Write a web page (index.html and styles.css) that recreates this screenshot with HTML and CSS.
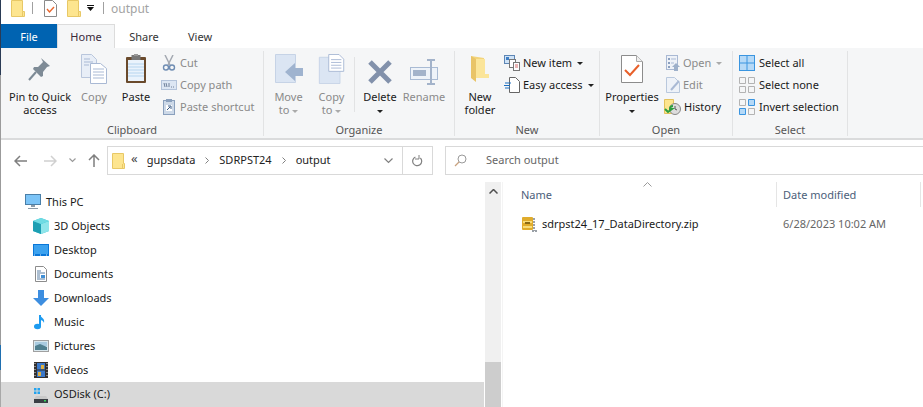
FILE: index.html
```html
<!DOCTYPE html>
<html lang="en">
<head>
<meta charset="utf-8">
<title>output</title>
<link rel="stylesheet" href="styles.css">
</head>
<body>
<div class="window">
  <div class="edge"></div>
  <div class="app">
    <header class="titlebar">
      <svg class="qa-folder" width="14" height="17" viewBox="0 0 14 17"><path d="M.5.500h11v11h2v5H.5z" fill="#fde58f" stroke="#e8c866"/><path d="M11.500 11.500v5" stroke="#e8c866"/></svg>
      <span class="qa-sep"></span>
      <svg class="qa-props" width="13" height="17" viewBox="0 0 13 17"><path d="M.5.500h8l4 4v12H.5z" fill="#fff" stroke="#8a8a8a"/><path d="M3 9l2.500 3L10 7" fill="none" stroke="#e9662c" stroke-width="1.400"/></svg>
      <svg class="qa-folder2" width="14" height="17" viewBox="0 0 14 17"><path d="M.5.500h11v11h2v5H.5z" fill="#fde58f" stroke="#e8c866"/><path d="M11.500 11.500v5" stroke="#e8c866"/></svg>
      <svg class="qa-menu" width="7" height="6" viewBox="0 0 7 6"><path d="M0 0h7v1H0zM0 2h7L3.500 6z" fill="#111"/></svg>
      <span class="qa-sep qa-sep-b"></span>
      <span class="title-text">output</span>
    </header>
    <nav class="tabs">
      <span class="tab tab-file">File</span>
      <span class="tab tab-home">Home</span>
      <span class="tab tab-share">Share</span>
      <span class="tab tab-view">View</span>
    </nav>
    <section class="ribbon">
      <div class="group g-clipboard">
        <div class="group-body">
          <div class="big b-pin">
            <svg width="24" height="26" viewBox="0 0 24 26"><path d="M13 2l9 8-3 1-4 5 0 4-2 1-8-8 1-2 4 0 5-5z" fill="#7e8b96"/><path d="M8 16L1 24" stroke="#7e8b96" stroke-width="2"/></svg>
            <span class="big-label">Pin to Quick<br>access</span>
          </div>
          <div class="big b-copy">
            <svg width="26" height="30" viewBox="0 0 26 30"><path d="M.5.500h10l5 5v18H.5z" fill="#e8eef7" stroke="#b9c6dc"/><path d="M9.500 9.500h10l6 5v15h-16z" fill="#fff" stroke="#a9b9d4"/><path d="M12 15h11M12 18h11M12 21h11M12 24h11M3 5h6M3 8h9M3 11h5" stroke="#a9b9d4"/></svg>
            <span class="big-label muted">Copy</span>
          </div>
          <div class="big b-paste">
            <svg width="22" height="30" viewBox="0 0 22 30"><rect x="1" y="3" width="20" height="26" fill="#6a4a2c" rx="1"/><rect x="3" y="6" width="16" height="21" fill="#eaf3fc"/><path d="M3 10h16M3 13h16M3 16h16M3 19h16M3 22h16" stroke="#b6d5ef"/><rect x="6.500" y="1" width="9" height="5" fill="#777"/><rect x="9" y="0" width="4" height="2" fill="#999"/></svg>
            <span class="big-label">Paste</span>
          </div>
          <div class="small-col">
            <div class="small muted">
              <svg width="16" height="16" viewBox="0 0 16 16"><path d="M4 0l5 10M12 0L7 10" stroke="#a4a9b2" stroke-width="1.500" fill="none"/><circle cx="5" cy="12.500" r="2.500" fill="none" stroke="#6f8db3" stroke-width="1.400"/><circle cx="11" cy="12.500" r="2.500" fill="none" stroke="#6f8db3" stroke-width="1.400"/></svg>
              <span>Cut</span>
            </div>
            <div class="small muted">
              <svg width="16" height="16" viewBox="0 0 16 16"><rect x=".5" y="3.500" width="15" height="9" fill="#dce6f3" stroke="#b3c3da"/><path d="M3 6l1 4M5 6l1 4M8 6l0 4" stroke="#6e7f99"/><path d="M10 10h1M12 10h1" stroke="#6e7f99"/></svg>
              <span>Copy path</span>
            </div>
            <div class="small muted">
              <svg width="16" height="16" viewBox="0 0 16 16"><rect x="2.500" y="1.500" width="11" height="14" fill="#cdd9e8" stroke="#8aa0bd"/><rect x="5" y="0" width="6" height="3" fill="#8aa0bd"/><rect x="5" y="6" width="6" height="6" fill="#fff"/><path d="M6 11l3-3M7 7h3v3" stroke="#3a5a85" fill="none"/></svg>
              <span>Paste shortcut</span>
            </div>
          </div>
        </div>
        <div class="group-label">Clipboard</div>
      </div>

      <div class="group g-organize">
        <div class="group-body">
          <div class="big b-move">
            <svg width="28" height="30" viewBox="0 0 28 30"><path d="M.5.500h20v28H.5z" fill="#dbe5f3" stroke="#c6d3e6"/><path d="M10 18l10-9v5h8v8h-8v5z" fill="#9fb3cf"/></svg>
            <span class="big-label muted">Move<br>to <i class="caret caret-grey"></i></span>
          </div>
          <div class="big b-copyto">
            <svg width="28" height="32" viewBox="0 0 28 32"><path d="M.5 3.500h22v28H.5z" fill="#dbe5f3" stroke="#c6d3e6"/><path d="M10.500.5h11l5 5v13h-16z" fill="#fff" stroke="#a9b9d4"/><path d="M13 6h11M13 9h11M13 12h11M13 15h11" stroke="#a9b9d4"/></svg>
            <span class="big-label muted">Copy<br>to <i class="caret caret-grey"></i></span>
          </div>
          <span class="inner-sep"></span>
          <div class="big b-delete">
            <svg width="26" height="26" viewBox="0 0 26 26"><path d="M3 3l20 20M23 3L3 23" stroke="#8291ab" stroke-width="5"/></svg>
            <span class="big-label">Delete<br><i class="caret"></i></span>
          </div>
          <div class="big b-rename">
            <svg width="28" height="26" viewBox="0 0 28 26"><rect x=".5" y="8.500" width="27" height="12" fill="#eef3f9" stroke="#a9bbd4"/><rect x="3" y="11" width="13" height="6" fill="#a3b3ca"/><path d="M17 1h8M21 1v25M17 25h8" stroke="#a3b3ca" stroke-width="2" fill="none"/></svg>
            <span class="big-label muted">Rename</span>
          </div>
        </div>
        <div class="group-label">Organize</div>
      </div>

      <div class="group g-new">
        <div class="group-body">
          <div class="big b-newfolder">
            <svg width="20" height="28" viewBox="0 0 20 28"><path d="M1 1l13 2v20H1z" fill="#f3d47b"/><path d="M5 4h10v15h4v4H6z" fill="#fbe59a"/><path d="M1 23l5 4V4L1 1z" fill="#e9c468"/></svg>
            <span class="big-label">New<br>folder</span>
          </div>
          <div class="small-col">
            <div class="small">
              <svg width="16" height="16" viewBox="0 0 16 16"><rect x=".5" y=".5" width="10" height="8" fill="#cfe3f7" stroke="#5d86b5"/><rect x="2" y="2" width="3" height="3" fill="#3f7fc6"/><rect x="5.500" y="4.500" width="6" height="8" fill="#fff" stroke="#777"/><rect x="9.500" y="7.500" width="6" height="8" fill="#fff" stroke="#777"/><path d="M11 10h3M11 12h3" stroke="#d56b6b"/></svg>
              <span>New item</span><i class="caret"></i>
            </div>
            <div class="small">
              <svg width="16" height="16" viewBox="0 0 16 16"><path d="M5.500.5h6l4 4v11h-10z" fill="#fff" stroke="#666"/><path d="M1 6h6M0 8.500h6M1 11h5" stroke="#1c6fc0" stroke-width="1"/></svg>
              <span>Easy access</span><i class="caret"></i>
            </div>
          </div>
        </div>
        <div class="group-label">New</div>
      </div>

      <div class="group g-open">
        <div class="group-body">
          <div class="big b-props">
            <svg width="22" height="28" viewBox="0 0 22 28"><path d="M.5.500h15l6 6v21H.5z" fill="#fff" stroke="#8c8c8c"/><path d="M15.500.5v6h6" fill="#eee" stroke="#aaa"/><path d="M4 15l5 5 9-10" fill="none" stroke="#e8602a" stroke-width="2"/></svg>
            <span class="big-label">Properties<br><i class="caret"></i></span>
          </div>
          <div class="small-col">
            <div class="small muted">
              <svg width="14" height="16" viewBox="0 0 14 16"><rect x=".5" y=".5" width="11" height="14" fill="#eef2f8" stroke="#a9b9d4"/><path d="M2 3h2v2H2zM2 7h2v2H2zM2 11h2v2H2z" fill="#8ba0bf"/><path d="M5 4h5M5 8h3" stroke="#a9b9d4"/><path d="M10 8l4 4h-2v4H8v-4H6z" fill="#9db0ca"/></svg>
              <span>Open</span><i class="caret caret-grey"></i>
            </div>
            <div class="small muted">
              <svg width="14" height="16" viewBox="0 0 14 16"><path d="M.5.500h8l5 5v10H.5z" fill="#eef2f8" stroke="#b9c8dd"/><path d="M5 13L13 4" stroke="#a9b9d4" stroke-width="2"/></svg>
              <span>Edit</span>
            </div>
            <div class="small">
              <svg class="hist-icon" width="17" height="16" viewBox="0 0 17 16"><path d="M.5.500h9v9h1v5H.5z" fill="#fde58f" stroke="#e3c25d"/><circle cx="11" cy="10" r="5.500" fill="#ddd" stroke="#888"/><path d="M11 7v3l2 1" stroke="#555" fill="none"/><path d="M1 10l3 3 4-3-2 0c0-2 1-3 3-3" fill="none" stroke="#2f9e3f" stroke-width="2"/></svg>
              <span>History</span>
            </div>
          </div>
        </div>
        <div class="group-label">Open</div>
      </div>

      <div class="group g-select">
        <div class="group-body">
          <div class="small-col">
            <div class="small">
              <svg width="16" height="16" viewBox="0 0 16 16"><rect x=".5" y=".5" width="15" height="15" fill="#b5d9f7" stroke="#3a95e0"/><path d="M8 0v16M0 8h16" stroke="#3a95e0"/></svg>
              <span>Select all</span>
            </div>
            <div class="small">
              <svg width="16" height="16" viewBox="0 0 16 16"><path d="M.5.500h6v6h-6zM9.500.5h6v6h-6zM.5 9.500h6v6h-6zM9.500 9.500h6v6h-6z" fill="none" stroke="#b3b3b3"/></svg>
              <span>Select none</span>
            </div>
            <div class="small">
              <svg width="16" height="16" viewBox="0 0 16 16"><path d="M.5.500h6v6h-6zM9.500 9.500h6v6h-6z" fill="none" stroke="#b3b3b3"/><path d="M9.500.5h6v6h-6zM.5 9.500h6v6h-6z" fill="#b5d9f7" stroke="#3a95e0"/></svg>
              <span>Invert selection</span>
            </div>
          </div>
        </div>
        <div class="group-label">Select</div>
      </div>
    </section>

    <section class="addressrow">
      <div class="navbtns">
        <svg class="nb-back" width="13" height="12" viewBox="0 0 13 12"><path d="M6 1L1 6l5 5M1 6h12" fill="none" stroke="#7f7f7f" stroke-width="1.500"/></svg>
        <svg class="nb-fwd" width="13" height="12" viewBox="0 0 13 12"><path d="M7 1l5 5-5 5M12 6H0" fill="none" stroke="#d0d0d0" stroke-width="1.500"/></svg>
        <svg class="nb-down" width="7" height="5" viewBox="0 0 7 5"><path d="M.5.500l3 3 3-3" fill="none" stroke="#9a9a9a" stroke-width="1.200"/></svg>
        <svg class="nb-up" width="12" height="13" viewBox="0 0 12 13"><path d="M1 6l5-5 5 5M6 1v12" fill="none" stroke="#7f7f7f" stroke-width="1.500"/></svg>
      </div>
      <div class="addrbox">
        <svg class="addr-folder" width="13" height="16" viewBox="0 0 13 16"><path d="M.5.500h11v10h1v5H.5z" fill="#fde58f" stroke="#e8c866"/><path d="M10.500 11v4.500" stroke="#e8c866"/></svg>
        <span class="crumb-more">«</span>
        <span class="crumb">gupsdata</span>
        <svg class="crumb-sep" width="4" height="7" viewBox="0 0 4 7"><path d="M.5.500l3 3-3 3" fill="none" stroke="#808080"/></svg>
        <span class="crumb">SDRPST24</span>
        <svg class="crumb-sep" width="4" height="7" viewBox="0 0 4 7"><path d="M.5.500l3 3-3 3" fill="none" stroke="#808080"/></svg>
        <span class="crumb">output</span>
        <span class="grow"></span>
        <svg class="addr-chev" width="9" height="6" viewBox="0 0 9 6"><path d="M.5.500l4 4 4-4" fill="none" stroke="#808080" stroke-width="1.200"/></svg>
        <div class="addr-refresh">
          <svg width="11" height="12" viewBox="0 0 11 12"><path d="M7 2.200A4.500 4.500 0 1 1 2 3" fill="none" stroke="#808080" stroke-width="1.200" transform="rotate(20 5.500 6.500)"/><path d="M7 0v4H3" fill="none" stroke="#808080"/></svg>
        </div>
      </div>
      <div class="searchbox">
        <svg width="13" height="13" viewBox="0 0 13 13"><circle cx="8" cy="5" r="4" fill="none" stroke="#9a9a9a"/><path d="M5 8l-4 4" stroke="#c9a27f" stroke-width="1.200"/></svg>
        <span>Search output</span>
      </div>
    </section>

    <section class="main">
      <aside class="tree">
        <div class="row row-root">
          <svg width="16" height="16" viewBox="0 0 16 16"><rect x=".5" y=".5" width="15" height="10" fill="#7cc4f7" stroke="#4a7fa8"/><path d="M6 11h4v2H6zM3 14h10v1H3z" fill="#8a9aa8"/></svg>
          <span>This PC</span>
        </div>
        <div class="row">
          <svg width="16" height="16" viewBox="0 0 16 16"><path d="M8 0l8 3v10l-8 3-8-3V3z" fill="#35c0d0"/><path d="M8 6l8-3v10l-8 3z" fill="#8fe5ea"/><path d="M0 3l8 3v10l-8-3z" fill="#1c9fb3"/><path d="M8 0l8 3-8 3-8-3z" fill="#6fdbe3"/></svg>
          <span>3D Objects</span>
        </div>
        <div class="row">
          <svg width="16" height="16" viewBox="0 0 16 16"><rect x="0" y="2" width="16" height="12" fill="#0a77d8"/><rect x="1" y="3" width="14" height="9" fill="#3ca2ef"/><path d="M1 13h14" stroke="#cde6fb" stroke-dasharray="1 5"/></svg>
          <span>Desktop</span>
        </div>
        <div class="row">
          <svg width="16" height="16" viewBox="0 0 16 16"><path d="M2.500.5h8l3 3v12h-11z" fill="#fff" stroke="#8c8c8c"/><path d="M4 5h4M4 7h8M4 9h3M4 11h3M4 13h8" stroke="#5a7fa3"/><rect x="8" y="9" width="4" height="3" fill="#3f8fd6"/></svg>
          <span>Documents</span>
        </div>
        <div class="row">
          <svg width="16" height="16" viewBox="0 0 16 16"><path d="M5 0h6v8h5l-8 8-8-8h5z" fill="#3d8ee0"/></svg>
          <span>Downloads</span>
        </div>
        <div class="row">
          <svg width="16" height="16" viewBox="0 0 16 16"><path d="M7 1v11" stroke="#1d9bf0" stroke-width="2"/><ellipse cx="4.500" cy="12.500" rx="3.500" ry="2.700" fill="#1d9bf0"/><path d="M7 1c1 3 5 3 4 8-.5-2-2-3-4-3z" fill="#1d9bf0"/></svg>
          <span>Music</span>
        </div>
        <div class="row">
          <svg width="16" height="16" viewBox="0 0 16 16"><rect x=".5" y="2.500" width="15" height="11" fill="#d9e8ee" stroke="#a0a0a0"/><rect x="2" y="4" width="12" height="4" fill="#a9cbe0"/><path d="M2 8l5-2 7 3v3H2z" fill="#4f7f8f"/></svg>
          <span>Pictures</span>
        </div>
        <div class="row">
          <svg width="16" height="16" viewBox="0 0 16 16"><rect x="1" y="0" width="14" height="16" fill="#33302f"/><rect x="4" y="1" width="8" height="6.500" fill="#3b78c9"/><rect x="4" y="8.500" width="8" height="6.500" fill="#3b78c9"/><rect x="8" y="3" width="3" height="4" fill="#e0b040"/><rect x="5" y="10" width="3" height="4" fill="#e0b040"/><path d="M2 1v14M14 1v14" stroke="#ddd" stroke-dasharray="1 2"/></svg>
          <span>Videos</span>
        </div>
        <div class="row row-sel">
          <svg width="16" height="16" viewBox="0 0 16 16"><path d="M1 1h2.500v2.500H1zM4.500 1H7v2.500H4.500zM1 4.500h2.500V7H1zM4.500 4.500H7V7H4.500z" fill="#23a3ee"/><path d="M3 9h10l2 3v3H1v-3z" fill="#c9c9c9"/><rect x="1" y="12" width="14" height="4" fill="#3a3f45"/><rect x="11" y="13" width="2" height="1.500" fill="#35d45a"/></svg>
          <span>OSDisk (C:)</span>
        </div>
      </aside>
      <div class="scrollbar">
        <svg width="9" height="5" viewBox="0 0 9 5"><path d="M.5 4.500l4-4 4 4" fill="none" stroke="#505050" stroke-width="1.500"/></svg>
        <span class="grow"></span>
        <div class="scroll-thumb"></div>
      </div>
      <div class="files">
        <div class="file-head">
          <svg class="sort" width="9" height="5" viewBox="0 0 9 5"><path d="M.5 4.500l4-4 4 4" fill="none" stroke="#9a9a9a"/></svg>
          <div class="col col-name">Name</div>
          <div class="col col-date">Date modified</div>
        </div>
        <div class="file-row">
          <div class="cell-name">
            <svg width="16" height="16" viewBox="0 0 16 16"><rect x="0" y="1" width="11" height="13" rx="1" fill="#e0ac2c"/><path d="M1 5h9v2H1zM1 10h9v2H1z" fill="#f7dc7a"/><rect x="3" y="6" width="5" height="2" fill="#8a6a15"/><path d="M12 2v13M15 15H9" stroke="#9aa0a6" stroke-width="2" stroke-dasharray="2 1"/></svg>
            <span>sdrpst24_17_DataDirectory.zip</span>
          </div>
          <div class="cell-date">6/28/2023 10:02 AM</div>
        </div>
      </div>
    </section>
  </div>
</div>
</body>
</html>
```

FILE: styles.css
```css
* { box-sizing: border-box; }
html, body { margin: 0; padding: 0; height: 100%; overflow: hidden; background: #fff; }
body { font: 11px/16px "Noto Sans", "Open Sans", sans-serif; color: #1a1a1a; }
svg { flex: none; display: block; }
.grow { flex: 1; }

.window { display: flex; height: 407px; width: 923px; }
.edge {
  width: 1px; flex: none;
  background: linear-gradient(#2a3b55 0 75px, #9b9b9b 75px 345px, #1f6fb0 345px 370px, #a8a8a8 370px);
}
.app { flex: 1; min-width: 0; display: flex; flex-direction: column; }

.titlebar { height: 24px; display: flex; align-items: center; padding: 0 0 8px 10px; }
.qa-sep { width: 1px; height: 12px; background: #a0a0a0; margin-left: 7px; }
.qa-props { margin-left: 11px; }
.qa-folder2 { margin-left: 10px; }
.qa-menu { margin-left: 6px; }
.qa-sep-b { margin-left: 9px; }
.title-text { margin-left: 7px; color: #a3a3a3; font-size: 12px; padding-top: 1px; }

.tabs { height: 24px; display: flex; }
.tab { display: flex; align-items: center; justify-content: center; color: #333; padding-top: 1px; }
.tab-file { width: 56px; background: #0063b1; color: #fff; }
.tab-home { width: 58px; color: #3a2a3a; background: #f5f6f7; border: 1px solid #dcdcdc; border-bottom: 0; }
.tab-share { width: 58px; }
.tab-view { width: 54px; }

.ribbon {
  height: 92px; display: flex; background: #f5f6f7;
  border-bottom: 2px solid #dadbdc;
}
.group {
  display: flex; flex-direction: column; flex: none;
  border-right: 1px solid #e2e3e4; margin: 3px 0 2px;
}
.group-body { flex: 1; display: flex; min-height: 0; }
.group-label { height: 14px; text-align: center; color: #555; line-height: 16px; }
.g-clipboard { width: 263px; }
.g-organize { width: 191px; }
.g-new { width: 145px; }
.g-open { width: 133px; }
.g-select { width: 115px; }

.big { display: flex; flex-direction: column; align-items: center; flex: none; height: 71px; line-height: 13px; text-align: center; }
.big svg { height: 30px; margin-bottom: 6px; margin-top: 3px; }
.big-label { display: block; height: 27px; white-space: nowrap; }
.muted { color: #8a8a8a; }
.b-pin { width: 78px; }
.b-copy { width: 36px; margin-left: -3px; }
.b-paste { width: 48px; }
.b-move { width: 43px; margin-left: 3px; }
.b-copyto { width: 43px; }
.b-delete { width: 48px; margin-left: 1px; }
.b-rename { width: 40px; }
.b-newfolder { width: 48px; margin-left: 1px; }
.b-props { width: 64px; }
.inner-sep { width: 1px; height: 55px; margin: 6px 0 0 1px; background: #e2e3e4; }
.b-rename svg { margin-top: 6px; margin-bottom: 3px; }
.b-delete svg { margin-bottom: 3px; margin-top: 6px; }

.small-col { display: flex; flex-direction: column; padding-top: 1px; }
.g-clipboard .small-col { margin-left: 1px; }
.g-open .small-col { margin-left: 2px; }
.g-select .small-col { margin-left: 6px; }
.g-select .small { gap: 4px; }
.small { height: 22px; display: flex; align-items: center; gap: 3px; white-space: nowrap; }
.hist-icon { margin-left: -2px; }

.caret { display: inline-block; width: 0; height: 0; border: 3.500px solid transparent; border-top: 3.500px solid #222; border-bottom: 0; vertical-align: middle; }
.caret-grey { border-top-color: #aaa; }
.small .caret { margin-left: 2px; }

.addressrow { height: 29px; margin-top: 6px; display: flex; }
.navbtns { width: 106px; flex: none; display: flex; align-items: center; }
.nb-back { margin-left: 13px; }
.nb-fwd { margin-left: 17px; }
.nb-down { margin-left: 12px; }
.nb-up { margin-left: 12px; }
.addrbox {
  width: 326px; flex: none; display: flex; align-items: center;
  border: 1px solid #d9d9d9; padding-left: 4px;
}
.crumb-more { margin-left: 6px; font-size: 13px; line-height: 12px; color: #444; position: relative; top: -3px; }
.crumb { margin-left: 9px; margin-bottom: 2px; color: #222; }
.crumb-sep { margin-left: 10px; margin-right: 1px; }
.addr-chev { margin-right: 9px; }
.addr-refresh { width: 30px; height: 100%; border-left: 1px solid #d9d9d9; display: flex; align-items: center; justify-content: center; }
.searchbox {
  margin-left: 12px; flex: 1; display: flex; align-items: center; gap: 19px;
  border: 1px solid #d9d9d9; border-right: 0; padding-left: 8px; color: #666;
}
.searchbox span { margin-bottom: 2px; }

.main { flex: 1; display: flex; min-height: 0; margin-top: 7px; }
.tree { width: 483px; flex: none; display: flex; flex-direction: column; padding: 7px 0 0; margin-right: 1px; }
.row { height: 24px; flex: none; display: flex; align-items: center; gap: 5px; padding-left: 32px; color: #1a1a1a; }
.row-root { padding-left: 24px; height: 25px; }
.row-sel { background: #d9d9d9; height: 25px; }
.row-sel span { margin-bottom: 2px; }
.scrollbar { width: 16px; flex: none; background: #f0f0f0; display: flex; flex-direction: column; align-items: center; padding-top: 7px; }
.scroll-thumb { width: 100%; height: 45px; background: #cdcdcd; }
.files { flex: 1; min-width: 0; border-left: 1px solid #f4f4f4; margin-left: 1px; position: relative; }
.sort { position: absolute; left: 140px; top: 0; }
.file-head { display: flex; height: 25px; padding-left: 0; color: #4c607a; }
.col { display: flex; align-items: center; height: 25px; padding-top: 1px; }
.col-name { width: 274px; padding-left: 18px; border-right: 1px solid #e5e5e5; }
.col-date { width: 144px; padding-left: 6px; border-right: 1px solid #e5e5e5; }
.file-row { display: flex; margin-top: 5px; height: 24px; align-items: center; }
.cell-name { width: 274px; padding-left: 19px; display: flex; align-items: center; gap: 4px; color: #1a1a1a; }
.cell-date { padding-left: 6px; color: #666; }
```
